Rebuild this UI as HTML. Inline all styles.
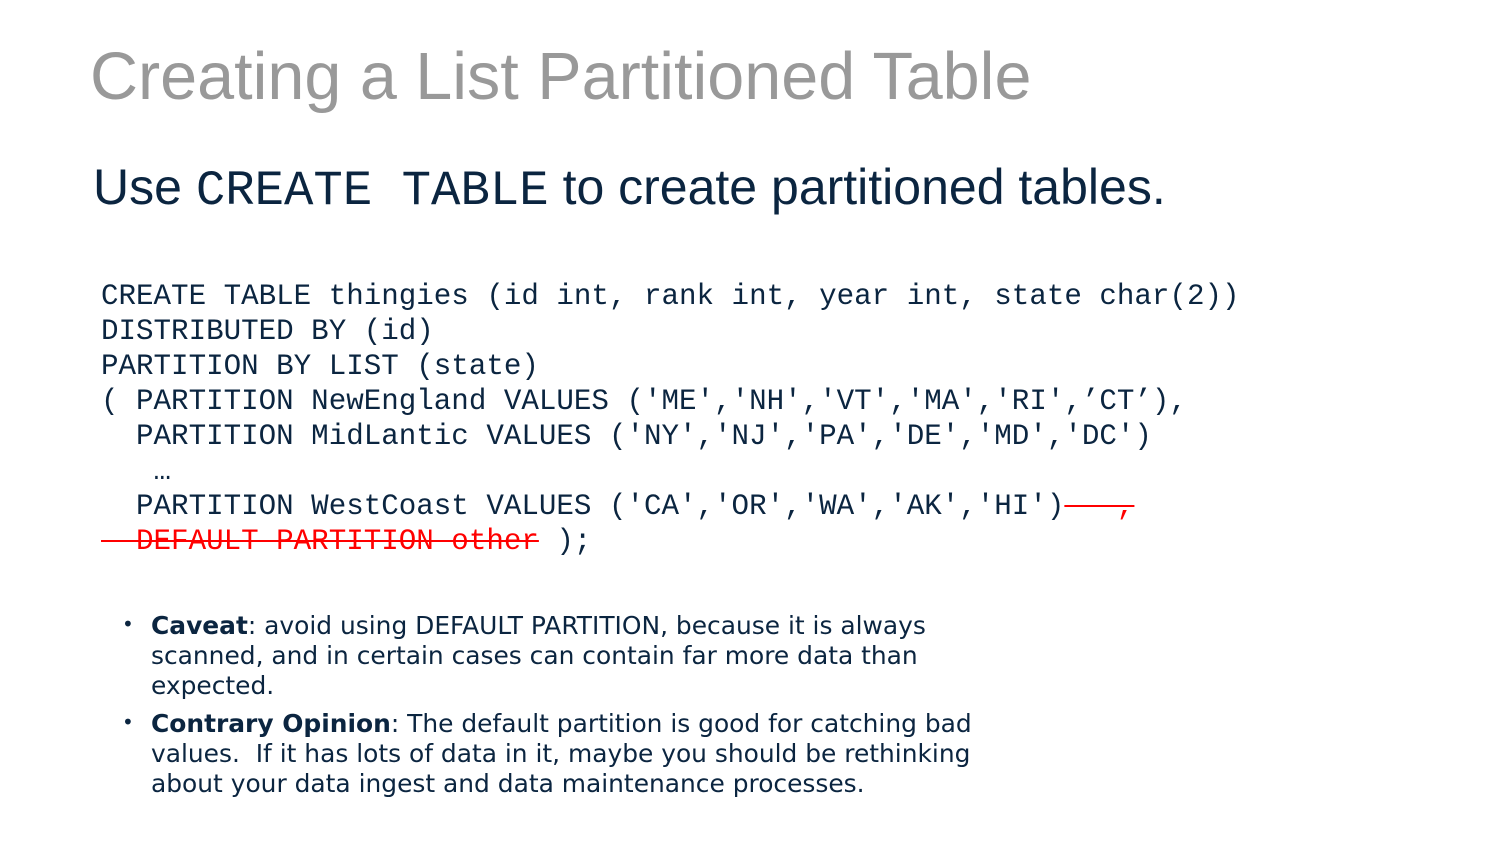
<!DOCTYPE html>
<html><head><meta charset="utf-8"><style>
body{margin:0;width:1500px;height:843px;background:#fff;overflow:hidden;position:relative;color:#0b2540}
.t{position:absolute;left:90px;top:39px;font:66.5px "Liberation Sans",sans-serif;color:#999;white-space:nowrap}
.s{position:absolute;left:93px;top:158px;font:50px "Liberation Sans",sans-serif;white-space:pre}
.s code{font-family:"Liberation Mono",monospace;font-size:49px}
pre{position:absolute;left:101px;top:279px;margin:0;font:29.2px/35px "Liberation Mono",monospace;color:#0b2540}
.r{color:#f00;text-decoration:line-through;text-decoration-color:#f00}
ul{position:absolute;left:122px;top:611px;margin:0;padding:0;list-style:none;font:24.9px/30px "DejaVu Sans",sans-serif;width:900px;color:#0b2540}
li{position:relative;padding-left:29px;margin-bottom:8px}
li:before{content:"•";position:absolute;left:0;top:-2px;font-size:20px}
</style></head><body>
<div class="t">Creating a List Partitioned Table</div>
<div class="s">Use <code>CREATE TABLE</code> to create partitioned tables.</div>
<pre>CREATE TABLE thingies (id int, rank int, year int, state char(2))
DISTRIBUTED BY (id)
PARTITION BY LIST (state)
( PARTITION NewEngland VALUES ('ME','NH','VT','MA','RI',’CT’),
  PARTITION MidLantic VALUES ('NY','NJ','PA','DE','MD','DC')
   …
  PARTITION WestCoast VALUES ('CA','OR','WA','AK','HI')<span class="r">   ,</span>
<span class="r">  DEFAULT PARTITION other</span> );</pre>
<ul>
<li><b>Caveat</b>: avoid using DEFAULT PARTITION, because it is always scanned, and in certain cases can contain far more data than expected.</li>
<li><b>Contrary Opinion</b>: The default partition is good for catching bad values.&nbsp; If it has lots of data in it, maybe you should be rethinking about your data ingest and data maintenance processes.</li>
</ul>
</body></html>
